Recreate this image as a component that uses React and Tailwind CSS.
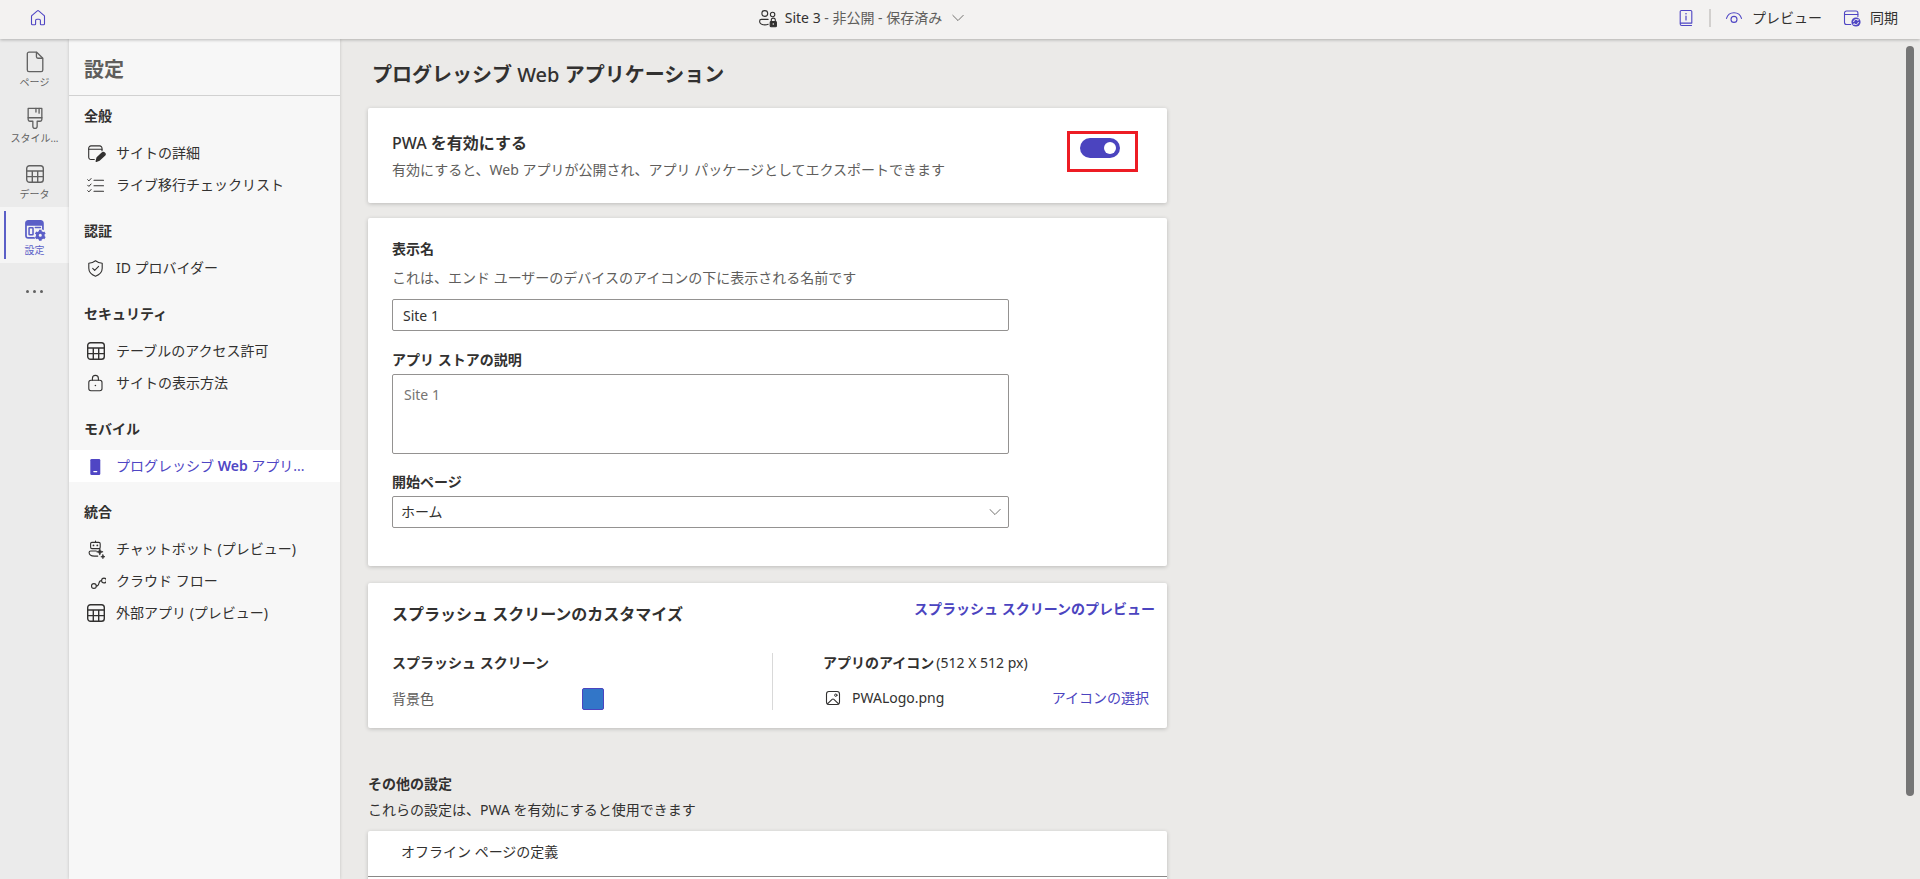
import React from 'react';

const NAV_GROUPS = [
  {
    title: '全般',
    items: [
      { label: 'サイトの詳細', icon: EditWindowIcon },
      { label: 'ライブ移行チェックリスト', icon: ChecklistIcon },
    ],
  },
  {
    title: '認証',
    items: [{ label: 'ID プロバイダー', icon: ShieldIcon }],
  },
  {
    title: 'セキュリティ',
    items: [
      { label: 'テーブルのアクセス許可', icon: TableIcon },
      { label: 'サイトの表示方法', icon: LockIcon },
    ],
  },
  {
    title: 'モバイル',
    items: [
      {
        label: (
          <>
            プログレッシブ <span className="font-semibold">Web</span> アプリ...
          </>
        ),
        icon: PhoneIcon,
        active: true,
      },
    ],
  },
  {
    title: '統合',
    items: [
      { label: 'チャットボット (プレビュー)', icon: BotIcon },
      { label: 'クラウド フロー', icon: FlowIcon },
      { label: '外部アプリ (プレビュー)', icon: TableIcon },
    ],
  },
];

const RAIL_ITEMS = [
  { label: 'ページ', icon: PageIcon },
  { label: 'スタイル...', icon: BrushIcon },
  { label: 'データ', icon: TableIcon },
  { label: '設定', icon: SettingsWindowIcon, active: true },
];

function Svg({ size = 20, children }) {
  return (
    <svg
      width={size}
      height={size}
      viewBox="0 0 20 20"
      fill="none"
      stroke="currentColor"
      strokeWidth="1.1"
      strokeLinecap="round"
      strokeLinejoin="round"
      className="shrink-0"
      aria-hidden="true"
    >
      {children}
    </svg>
  );
}

function HomeIcon() {
  return (
    <Svg>
      <path d="M3.500 8.600c0-.5.200-1 .6-1.300L9.300 2.900a1 1 0 0 1 1.400 0l5.200 4.400c.4.300.6.800.6 1.300v7.200c0 .6-.4 1-1 1H13.200c-.5 0-.8-.4-.8-.8V12.500c0-.8-.6-1.300-1.300-1.300H8.900c-.8 0-1.300.6-1.300 1.300V16c0 .4-.4.8-.8.8H4.500c-.6 0-1-.4-1-1z" />
    </Svg>
  );
}

function PageIcon() {
  return (
    <Svg size={24}>
      <path d="M5 1.800h6.400l5.100 5.100v9.700c0 .8-.6 1.400-1.400 1.400H5c-.8 0-1.400-.6-1.400-1.400V3.200c0-.8.6-1.400 1.400-1.400z" />
      <path d="M11.200 2v3.700c0 .7.500 1.200 1.200 1.200h3.800" />
    </Svg>
  );
}

function BrushIcon() {
  return (
    <Svg size={24}>
      <path d="M4.300 2h11.400v9.300c0 .8-.6 1.400-1.400 1.400h-2.500v4.200a1.800 1.800 0 0 1-3.600 0v-4.200H5.700c-.8 0-1.400-.6-1.400-1.400z" />
      <path d="M4.300 9.800h11.400M10.800 2v3M13.400 2v4" />
    </Svg>
  );
}

function TableIcon() {
  return (
    <Svg>
      <rect x="1.700" y="1.700" width="16.600" height="16.600" rx="2.800" strokeWidth="1.400" />
      <path d="M1.700 7h16.600M1.700 12.600h16.600M7.300 7v11.300M12.700 7v11.300" strokeWidth="1.400" />
    </Svg>
  );
}

function SettingsWindowIcon() {
  return (
    <Svg size={22}>
      <path
        fill="currentColor"
        stroke="none"
        fillRule="evenodd"
        d="M3.800 1h11.400C16.800 1 18 2.200 18 3.800v6.400a5 5 0 0 0-1.600-.6V6.200H2.600v9c0 .7.500 1.200 1.200 1.200h5.800c.1.600.3 1.100.6 1.600H3.800C2.200 18 1 16.800 1 15.200V3.800C1 2.200 2.200 1 3.800 1z"
      />
      <rect x="4.600" y="8" width="3.600" height="6.400" rx=".5" strokeWidth="1.400" />
      <path d="M10.300 7.800h4.600" strokeWidth="1.400" />
      <circle cx="14.800" cy="14.800" r="2.700" strokeWidth="2.600" />
      <path
        d="M14.800 9.800v1.600M14.800 18.200v1.600M10.500 12.300l1.400.8M17.700 16.500l1.400.8M10.500 17.300l1.400-.8M17.700 13.100l1.400-.8"
        strokeWidth="2.400"
        strokeLinecap="butt"
      />
    </Svg>
  );
}

function EditWindowIcon() {
  return (
    <Svg>
      <path d="M8.300 16.500H5a2.300 2.300 0 0 1-2.300-2.300V5.200A2.300 2.300 0 0 1 5 2.900h8.700A2.300 2.300 0 0 1 16 5.200v2.600" />
      <path d="M2.700 6.200H16" />
      <path d="M16.100 10.100a1.600 1.600 0 0 1 2.500 2.200l-5.200 4.800-3.200 1.200.9-3.500z" fill="currentColor" strokeWidth="1.400" />
    </Svg>
  );
}

function ChecklistIcon() {
  return (
    <Svg>
      <path d="M8 5.200h9.500M8 10.700h9.500M8 16.200h9.500" />
      <path d="M1.700 4.700l1.200 1.200 2.200-2.400M1.700 10.200l1.200 1.200L5.100 9M1.700 15.700l1.200 1.200 2.200-2.400" strokeWidth="1" />
    </Svg>
  );
}

function ShieldIcon() {
  return (
    <Svg>
      <path d="M9.500 2.800c1.900 1.500 4.100 2.300 6.700 2.400v5c0 3.600-2.300 6.300-6.700 8-4.400-1.700-6.700-4.400-6.700-8v-5c2.600-.1 4.800-.9 6.700-2.400z" />
      <path d="M6.700 10.300l2 2 3.900-3.900" />
    </Svg>
  );
}

function LockIcon() {
  return (
    <Svg>
      <rect x="2.800" y="7.200" width="13.200" height="10.600" rx="2.200" />
      <path d="M6.400 7.100V5.400a3 3 0 0 1 6 0v1.700" />
      <circle cx="9.400" cy="12.500" r=".8" fill="currentColor" stroke="none" />
    </Svg>
  );
}

function PhoneIcon() {
  return (
    <Svg>
      <rect x="4.300" y="3" width="10" height="16" rx="1.300" fill="currentColor" stroke="none" />
      <path d="M7.800 15.600h3" stroke="white" />
    </Svg>
  );
}

function BotIcon() {
  return (
    <Svg>
      <path d="M9.500 2v1.200" />
      <rect x="4.600" y="3.400" width="9.600" height="6.200" rx="1.300" />
      <circle cx="7.500" cy="6.400" r=".9" fill="currentColor" stroke="none" />
      <circle cx="11.300" cy="6.400" r=".9" fill="currentColor" stroke="none" />
      <path d="M10.300 12H4.700c-.9 0-1.600.6-1.600 1.500 0 2.200 1.900 3.600 5.400 3.600h3.300" />
      <path
        d="M13.800 9.500l.9 2.400 2.400.9-2.400.9-.9 2.400-.9-2.400-2.400-.9 2.400-.9zM16.900 15.600l.6 1.500 1.500.6-1.500.6-.6 1.500-.6-1.500-1.500-.6 1.500-.6z"
        fill="currentColor"
        strokeWidth=".6"
      />
    </Svg>
  );
}

function FlowIcon() {
  return (
    <Svg>
      <circle cx="7.900" cy="15" r="2.400" />
      <circle cx="18" cy="9.500" r="2.400" />
      <path d="M10.400 14.900c4 0 1-5.300 5.100-5.300" />
    </Svg>
  );
}

function PeopleLockIcon() {
  return (
    <Svg>
      <circle cx="6.800" cy="5.500" r="2.900" />
      <circle cx="14.600" cy="6.500" r="2.200" />
      <path d="M10.200 16.300c-1 .4-2.100.6-3.400.6-3.400 0-5.200-1.400-5.200-3.700 0-1 .8-1.800 1.800-1.800h6.700" />
      <path d="M13.300 13.300v-1.200a2 2 0 0 1 4 0v1.200" />
      <rect x="12.200" y="13.500" width="6.200" height="5.300" rx=".9" fill="currentColor" />
      <circle cx="15.300" cy="16" r=".8" fill="#f3f2f1" stroke="none" />
    </Svg>
  );
}

function GuideIcon() {
  return (
    <Svg>
      <path d="M15.500 17.500H5.800a1.600 1.600 0 0 1-1.600-1.600V3.600c0-.6.500-1.100 1.100-1.100h9.400c.6 0 1.100.5 1.100 1.100v11.500H4.500" />
      <path d="M10 8v4" strokeWidth="1.200" />
      <circle cx="10" cy="5.800" r=".8" fill="currentColor" stroke="none" />
    </Svg>
  );
}

function EyeIcon() {
  return (
    <Svg>
      <path d="M2.500 10.400c1-3.500 3.900-5.600 7.500-5.600s6.500 2.100 7.500 5.600" />
      <circle cx="10" cy="11.400" r="3" />
    </Svg>
  );
}

function SyncIcon() {
  return (
    <Svg>
      <path d="M8.800 16.500H4.500a2 2 0 0 1-2-2V5a2 2 0 0 1 2-2h9.400a2 2 0 0 1 2 2v3.400" />
      <path d="M2.500 6.500h13.400" />
      <circle cx="14" cy="14" r="4.600" fill="currentColor" stroke="none" />
      <path d="M11.600 13.600a2.500 2.500 0 0 1 4.500-1.100v-1.200M16.400 14.400a2.500 2.500 0 0 1-4.500 1.100v1.200" stroke="#f3f2f1" strokeWidth="1" />
    </Svg>
  );
}

function ImageIcon() {
  return (
    <Svg>
      <rect x="3.500" y="3.500" width="13" height="13" rx="2.400" />
      <circle cx="12.800" cy="7.200" r="1.200" strokeWidth="1" />
      <path d="M4.400 15.800l4.700-4.500c.5-.5 1.300-.5 1.800 0l4.700 4.500" />
    </Svg>
  );
}

function ChevronIcon() {
  return (
    <Svg size={16}>
      <path d="M3.500 6.700l6.500 6.500 6.500-6.500" />
    </Svg>
  );
}

function TopBar() {
  return (
    <header className="relative z-10 flex h-[39px] shrink-0 items-center justify-between bg-[#f3f2f1] pb-3 pl-7 pr-[22px] pt-2 shadow-[0_1px_3px_rgba(0,0,0,0.25)]">
      <a href="#home" aria-label="ホーム" className="text-[#4f46c4]">
        <HomeIcon />
      </a>
      <button className="flex items-center text-[#323130]">
        <PeopleLockIcon />
        <span className="ml-[7px] mr-2">
          Site 3<span className="text-[#605e5c]"> - 非公開 - 保存済み</span>
        </span>
        <span className="text-[#605e5c]">
          <ChevronIcon />
        </span>
      </button>
      <div className="flex items-center text-[#323130]">
        <button aria-label="ガイド" className="text-[#4f46c4]">
          <GuideIcon />
        </button>
        <span className="mx-[13px] h-[18px] w-0.5 bg-[#d2d0ce]" />
        <button className="flex items-center gap-2">
          <span className="text-[#4f46c4]">
            <EyeIcon />
          </span>
          プレビュー
        </button>
        <button className="ml-5 flex items-center gap-2">
          <span className="text-[#4f46c4]">
            <SyncIcon />
          </span>
          同期
        </button>
      </div>
    </header>
  );
}

function Rail() {
  return (
    <nav className="w-[69px] shrink-0 bg-[#ebebeb] text-[10px] leading-4 text-[#616161]">
      {RAIL_ITEMS.map(({ label, icon: Icon, active }) => (
        <button
          key={label}
          className={`relative flex h-14 w-full flex-col items-center pt-[11px] ${active ? 'bg-[#f5f5f5] text-[#5b5fc7]' : ''}`}
        >
          {active && <span className="absolute bottom-1 left-1 top-1 w-0.5 bg-[#5b5fc7]" />}
          <span className="flex h-6 items-center">
            <Icon />
          </span>
          <span className="whitespace-nowrap">{label}</span>
        </button>
      ))}
      <button aria-label="その他" className="flex h-14 w-full items-center justify-center gap-1">
        <span className="size-[3px] rounded-full bg-[#616161]" />
        <span className="size-[3px] rounded-full bg-[#616161]" />
        <span className="size-[3px] rounded-full bg-[#616161]" />
      </button>
    </nav>
  );
}

function SettingsNav() {
  return (
    <aside className="z-[1] w-[271px] shrink-0 bg-[#f7f7f7] shadow-[0_0_3px_rgba(0,0,0,0.18)]">
      <h2 className="flex h-[57px] items-center border-b border-[#d1d1d1] pl-[15px] pt-1.5 text-xl font-bold text-[#605e5c]">設定</h2>
      <div className="flex flex-col gap-5 pt-2.5">
        {NAV_GROUPS.map(group => (
          <section key={group.title}>
            <h3 className="mb-[11px] pl-[15px] font-bold">{group.title}</h3>
            {group.items.map(({ label, icon: Icon, active }, i) => (
              <a
                key={i}
                href="#nav"
                className={`flex h-8 items-center gap-2.5 pl-[17px] ${active ? 'bg-white text-[#4f46c4]' : ''}`}
              >
                <Icon />
                <span className="truncate">{label}</span>
              </a>
            ))}
          </section>
        ))}
      </div>
    </aside>
  );
}

function Card({ className = '', children }) {
  return (
    <section className={`rounded-xs bg-white shadow-[0_1px_4px_rgba(0,0,0,0.2)] ${className}`}>
      {children}
    </section>
  );
}

function Content() {
  const [enabled, setEnabled] = React.useState(true);
  const [name, setName] = React.useState('Site 1');

  return (
    <main className="min-w-0 flex-1 overflow-hidden pl-7 pr-4">
      <div className="w-full max-w-[799px]">
        <h1 className="pb-[19px] pl-1 pt-[22px] text-xl font-semibold leading-7">
          プログレッシブ <span className="font-medium">Web</span> アプリケーション
        </h1>

        <Card className="flex items-start justify-between pb-[23px] pl-6 pr-[29px] pt-[23px]">
          <div>
            <h2 className="text-base font-semibold leading-6">
              <span className="font-medium">PWA</span> を有効にする
            </h2>
            <p className="mt-[5px] text-[#605e5c]">有効にすると、Web アプリが公開され、アプリ パッケージとしてエクスポートできます</p>
          </div>
          <div className="flex h-[41px] w-[71px] justify-start border-[3px] border-[#ed1c24] pl-2.5 pt-1">
            <button
              role="switch"
              aria-checked={enabled}
              aria-label="PWA を有効にする"
              onClick={() => setEnabled(!enabled)}
              className={`flex h-5 w-10 items-center rounded-full px-1 ${enabled ? 'justify-end bg-[#4b44bf]' : 'bg-[#8a8886]'}`}
            >
              <span className="size-3 rounded-full bg-white" />
            </button>
          </div>
        </Card>

        <Card className="mt-[15px] px-6 pb-[38px] pt-[21px]">
          <div className="flex w-full max-w-[617px] flex-col">
            <label htmlFor="display-name" className="font-bold">表示名</label>
            <p className="mt-[9px] text-[#605e5c]">これは、エンド ユーザーのデバイスのアイコンの下に表示される名前です</p>
            <input
              id="display-name"
              value={name}
              onChange={e => setName(e.target.value)}
              className="mt-[11px] h-8 rounded-xs border border-[#949291] px-2.5"
            />
            <label htmlFor="store-description" className="mt-[19px] font-bold">アプリ ストアの説明</label>
            <textarea
              id="store-description"
              placeholder="Site 1"
              className="mt-1 h-20 resize-none rounded-xs border border-[#949291] px-[11px] py-2.5 placeholder:text-[#767472]"
            />
            <label htmlFor="start-page" className="mt-[18px] font-bold">開始ページ</label>
            <div className="relative mt-1">
              <select
                id="start-page"
                className="h-8 w-full appearance-none rounded-xs border border-[#949291] bg-white pl-2"
              >
                <option>ホーム</option>
              </select>
              <span className="pointer-events-none absolute right-1.5 top-2 text-[#605e5c]">
                <ChevronIcon />
              </span>
            </div>
          </div>
        </Card>

        <Card className="mt-[17px] pb-[18px] pl-6 pr-3 pt-4">
          <div className="flex items-start justify-between">
            <h2 className="pt-[3px] text-base font-semibold leading-6">スプラッシュ スクリーンのカスタマイズ</h2>
            <a href="#preview" className="font-semibold text-[#4b44bf]">スプラッシュ スクリーンのプレビュー</a>
          </div>
          <div className="mt-[27px] flex">
            <div className="w-[380px] shrink-0">
              <h3 className="font-semibold">スプラッシュ スクリーン</h3>
              <div className="mt-[15px] flex items-center">
                <label htmlFor="background-color" className="w-[190px] text-[#605e5c]">背景色</label>
                <button id="background-color" className="size-[22px] rounded-xs border border-[#4b44bf] bg-[#3276c8]" />
              </div>
            </div>
            <div className="flex-1 border-l border-[#d9d9d9] pl-[50px] pr-1.5">
              <h3 className="font-semibold">
                アプリのアイコン<span className="ml-0.5 font-normal">(512 X 512 px)</span>
              </h3>
              <div className="mt-[15px] flex items-center gap-[9px]">
                <ImageIcon />
                <span>PWALogo.png</span>
                <button className="ml-auto text-[#4b44bf]">アイコンの選択</button>
              </div>
            </div>
          </div>
        </Card>

        <h2 className="mt-[46px] font-semibold">その他の設定</h2>
        <p className="mt-1.5">これらの設定は、PWA を有効にすると使用できます</p>
        <Card className="mt-[11px]">
          <a href="#offline" className="flex h-[46px] items-center border-b border-[#8a8886] pb-1 pl-[33px]">オフライン ページの定義</a>
          <div className="h-[46px]" />
        </Card>
      </div>
    </main>
  );
}

export default function App() {
  return (
    <div className="flex h-screen flex-col overflow-hidden bg-[#ebeae8] font-['Noto_Sans','Noto_Sans_CJK_JP',sans-serif] text-sm leading-5 text-[#323130]">
      <TopBar />
      <div className="flex min-h-0 flex-1">
        <Rail />
        <SettingsNav />
        <Content />
        <div className="shrink-0 pr-1.5 pt-[7px]">
          <div className="h-[90%] w-2 rounded-full bg-[#757575]" />
        </div>
      </div>
    </div>
  );
}
